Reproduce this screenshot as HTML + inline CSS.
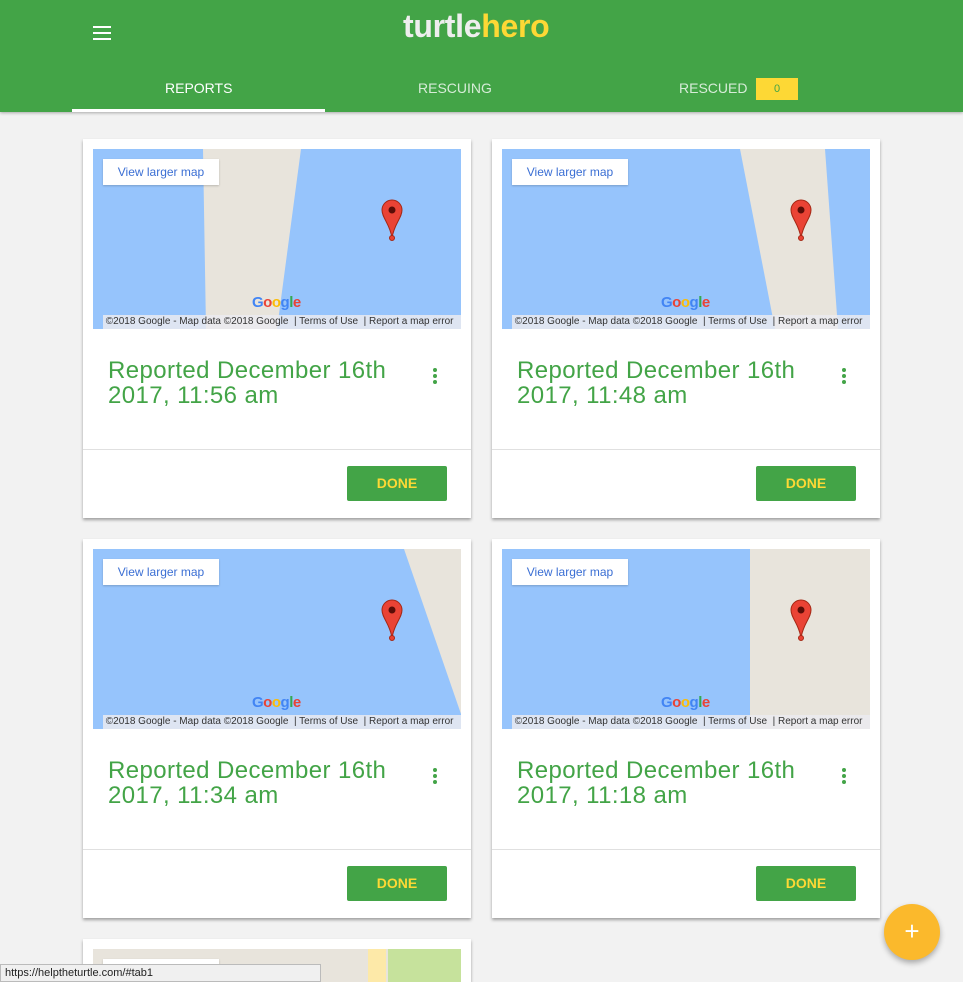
<!DOCTYPE html>
<html style="width:963px;height:982px;overflow:hidden"><head><meta charset="utf-8"><style>
*{margin:0;padding:0;box-sizing:border-box}
body{width:963px;height:982px;background:#f2f2f2;font-family:"Liberation Sans",sans-serif;position:relative;overflow:hidden}
.hdr{position:absolute;left:0;top:0;width:963px;height:112px;background:#43a447;box-shadow:0 1px 3px rgba(0,0,0,.3)}
.logo{position:absolute;left:403px;top:8px;font-size:32px;font-weight:bold;letter-spacing:-0.3px;color:#eee}
.logo span{color:#fdd835}
.burger{position:absolute;left:93px;top:26px;width:18px}
.burger i{display:block;height:2px;background:#fff;margin-bottom:4px}
.tab{position:absolute;top:80px;font-size:14px;color:#d7ecd8}
.ul{position:absolute;left:72px;top:109px;width:253px;height:3px;background:#fff}
.badge{position:absolute;left:756px;top:78px;width:42px;height:22px;background:#fdd835;color:#43a447;font-size:11px;text-align:center;line-height:22px}
.card{position:absolute;width:388px;height:379px;background:#fff;box-shadow:0 2px 3px rgba(0,0,0,.35);overflow:hidden}
.map{position:absolute;left:10px;top:10px;width:368px;height:180px;background:#96c4fc;overflow:hidden}
.map svg{position:absolute;left:0;top:0}
.vl{position:absolute;left:10px;top:10px;width:116px;height:26px;background:#fff;color:#3b6fd4;font-size:12px;line-height:26px;text-align:center;box-shadow:0 1px 2px rgba(0,0,0,.2)}
.attr{position:absolute;left:10px;bottom:0;width:358px;height:14px;background:rgba(235,235,240,.85);font-size:10px;color:#333;line-height:14px;white-space:nowrap;overflow:hidden}
.gl{position:absolute;left:159px;top:145px;font-size:15px;font-weight:bold;letter-spacing:-0.5px}
.title{position:absolute;left:25px;top:219px;font-size:24px;line-height:25px;color:#43a447;letter-spacing:0.4px}
.dots{position:absolute;left:350px;top:229px;width:4px}
.dots i{display:block;width:4px;height:4px;border-radius:2px;background:#43a447;margin-bottom:2px}
.div{position:absolute;left:0;top:310px;width:388px;height:1px;background:#e0e0e0}
.done{position:absolute;left:264px;top:327px;width:100px;height:35px;background:#43a447;color:#fdd835;font-weight:bold;font-size:14px;text-align:center;line-height:35px;border-radius:2px}
.fab{position:absolute;left:884px;top:904px;width:56px;height:56px;border-radius:28px;background:#fbb92c;color:#fff;font-size:26px;text-align:center;line-height:54px;box-shadow:0 3px 6px rgba(0,0,0,.3)}
.status{position:absolute;left:0;top:964px;width:321px;height:18px;background:#f0f0f0;border:1px solid #bbb;font-size:11px;line-height:16px;padding-left:4px;color:#222}
</style></head><body>
<div class="hdr">
<div class="burger"><i></i><i></i><i></i></div>
<div class="logo">turtle<span>hero</span></div>
<div class="tab" style="left:165px;color:#fff">REPORTS</div>
<div class="tab" style="left:418px">RESCUING</div>
<div class="tab" style="left:679px">RESCUED</div>
<div class="badge">0</div>
<div class="ul"></div>
</div>

<div class="card" style="left:83px;top:139px">
<div class="map"><svg width="368" height="180"><polygon points="110,0 208,0 184,180 113,180" fill="#e8e4dc"/>
<path d="M299 51a10 10 0 0 1 10 10c0 8-8 14-10 28c-2-14-10-20-10-28a10 10 0 0 1 10-10z" fill="#ea4335" stroke="#a52714"/><circle cx="299" cy="61" r="3.5" fill="#5a0d07"/><circle cx="299" cy="89" r="2.5" fill="#ea4335" stroke="#a52714"/></svg>
<div class="vl">View larger map</div>
<div class="gl"><span style="color:#4285f4">G</span><span style="color:#ea4335">o</span><span style="color:#fbbc05">o</span><span style="color:#4285f4">g</span><span style="color:#34a853">l</span><span style="color:#ea4335">e</span></div>
<div class="attr">&nbsp;©2018 Google - Map data ©2018 Google &nbsp;| Terms of Use &nbsp;| Report a map error</div></div>
<div class="title">Reported December 16th<br>2017, 11:56 am</div>
<div class="dots"><i></i><i></i><i></i></div><div class="div"></div><div class="done">DONE</div></div>

<div class="card" style="left:492px;top:139px">
<div class="map"><svg width="368" height="180"><polygon points="238,0 323,0 336,180 273,180" fill="#e8e4dc"/>
<path d="M299 51a10 10 0 0 1 10 10c0 8-8 14-10 28c-2-14-10-20-10-28a10 10 0 0 1 10-10z" fill="#ea4335" stroke="#a52714"/><circle cx="299" cy="61" r="3.5" fill="#5a0d07"/><circle cx="299" cy="89" r="2.5" fill="#ea4335" stroke="#a52714"/></svg>
<div class="vl">View larger map</div>
<div class="gl"><span style="color:#4285f4">G</span><span style="color:#ea4335">o</span><span style="color:#fbbc05">o</span><span style="color:#4285f4">g</span><span style="color:#34a853">l</span><span style="color:#ea4335">e</span></div>
<div class="attr">&nbsp;©2018 Google - Map data ©2018 Google &nbsp;| Terms of Use &nbsp;| Report a map error</div></div>
<div class="title">Reported December 16th<br>2017, 11:48 am</div>
<div class="dots"><i></i><i></i><i></i></div><div class="div"></div><div class="done">DONE</div></div>

<div class="card" style="left:83px;top:539px">
<div class="map"><svg width="368" height="180"><polygon points="311,0 368,0 368,165" fill="#e8e4dc"/>
<path d="M299 51a10 10 0 0 1 10 10c0 8-8 14-10 28c-2-14-10-20-10-28a10 10 0 0 1 10-10z" fill="#ea4335" stroke="#a52714"/><circle cx="299" cy="61" r="3.5" fill="#5a0d07"/><circle cx="299" cy="89" r="2.5" fill="#ea4335" stroke="#a52714"/></svg>
<div class="vl">View larger map</div>
<div class="gl"><span style="color:#4285f4">G</span><span style="color:#ea4335">o</span><span style="color:#fbbc05">o</span><span style="color:#4285f4">g</span><span style="color:#34a853">l</span><span style="color:#ea4335">e</span></div>
<div class="attr">&nbsp;©2018 Google - Map data ©2018 Google &nbsp;| Terms of Use &nbsp;| Report a map error</div></div>
<div class="title">Reported December 16th<br>2017, 11:34 am</div>
<div class="dots"><i></i><i></i><i></i></div><div class="div"></div><div class="done">DONE</div></div>

<div class="card" style="left:492px;top:539px">
<div class="map"><svg width="368" height="180"><polygon points="248,0 368,0 368,180 248,180" fill="#e8e4dc"/>
<path d="M299 51a10 10 0 0 1 10 10c0 8-8 14-10 28c-2-14-10-20-10-28a10 10 0 0 1 10-10z" fill="#ea4335" stroke="#a52714"/><circle cx="299" cy="61" r="3.5" fill="#5a0d07"/><circle cx="299" cy="89" r="2.5" fill="#ea4335" stroke="#a52714"/></svg>
<div class="vl">View larger map</div>
<div class="gl"><span style="color:#4285f4">G</span><span style="color:#ea4335">o</span><span style="color:#fbbc05">o</span><span style="color:#4285f4">g</span><span style="color:#34a853">l</span><span style="color:#ea4335">e</span></div>
<div class="attr">&nbsp;©2018 Google - Map data ©2018 Google &nbsp;| Terms of Use &nbsp;| Report a map error</div></div>
<div class="title">Reported December 16th<br>2017, 11:18 am</div>
<div class="dots"><i></i><i></i><i></i></div><div class="div"></div><div class="done">DONE</div></div>

<div class="card" style="left:83px;top:939px;height:43px">
<div class="map" style="background:#e8e4dc;height:33px"><svg width="368" height="33"><rect x="275" y="0" width="18" height="33" fill="#fde9a8"/><rect x="295" y="0" width="73" height="33" fill="#c6e29c"/></svg>
<div class="vl" style="top:10px"></div></div></div>

<div class="fab">+</div>
<div class="status">https://helptheturtle.com/#tab1</div>
</body></html>
